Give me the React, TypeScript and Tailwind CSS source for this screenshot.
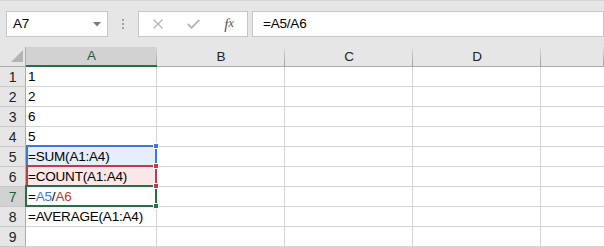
const rows = ['1', '2', '6', '5', '=SUM(A1:A4)', '=COUNT(A1:A4)', '', '=AVERAGE(A1:A4)', '']

const headers = [
  { label: 'A', width: 'w-[131px]' },
  { label: 'B', width: 'w-[128px]' },
  { label: 'C', width: 'w-[128px]' },
  { label: 'D', width: 'w-[128px]' },
  { label: '', width: 'flex-1' },
]

function CornerCell() {
  return (
    <div className="relative h-[20px] w-[26px] border-b border-r border-[#ababab] bg-[#e6e6e6]">
      <svg className="absolute left-[11px] top-[3px]" width="12" height="12" viewBox="0 0 12 12">
        <polygon points="12,0 12,12 0,12" fill="#b4b4b4" />
      </svg>
    </div>
  )
}

function ColumnHeader({ label, width, active }: { label: string; width: string; active: boolean }) {
  return (
    <div
      className={`relative flex h-[20px] items-center justify-center text-[13.5px] ${width} ${
        active ? 'border-b-2 border-[#217346] bg-[#d2d2d2] text-[#1e5e3a]' : 'border-b border-[#ababab] bg-[#e6e6e6] text-[#222]'
      }`}
    >
      {label}
      <div className="absolute right-0 top-0 h-full w-px bg-linear-to-b from-[#dcdcdc] to-[#9e9e9e]" />
    </div>
  )
}

function SheetRow({ index, text }: { index: number; text: string }) {
  const rowNum = index + 1
  const activeRow = rowNum === 7
  let fill = 'bg-white'
  if (rowNum === 5) fill = 'bg-[#e7eef9]'
  if (rowNum === 6) fill = 'bg-[#fae8e8]'

  return (
    <div className="flex h-[20px]">
      <div
        className={`flex w-[26px] items-center justify-center border-b border-r border-b-[#c8c8c8] border-r-[#ababab] text-[14px] ${
          activeRow ? 'bg-[#d2d2d2] text-[#1e5e3a]' : 'bg-[#e6e6e6] text-[#222]'
        }`}
      >
        {rowNum}
      </div>
      <div className={`flex w-[131px] items-center border-b border-r border-[#d4d4d4] pl-[2px] ${fill}`}>
        {activeRow ? (
          <span>
            =<span className="text-[#3c78d8]">A5</span>/<span className="text-[#c0392b]">A6</span>
          </span>
        ) : (
          text
        )}
      </div>
      <div className="w-[128px] border-b border-r border-[#d4d4d4] bg-white" />
      <div className="w-[128px] border-b border-r border-[#d4d4d4] bg-white" />
      <div className="w-[128px] border-b border-r border-[#d4d4d4] bg-white" />
      <div className="flex-1 border-b border-[#d4d4d4] bg-white" />
    </div>
  )
}

function Handle({ color, className }: { color: string; className: string }) {
  return <div className={`absolute h-[6px] w-[6px] border border-white ${color} ${className}`} />
}

export default function App() {
  return (
    <div className="relative h-[247px] w-[604px] overflow-hidden bg-[#e6e6e6] font-['Liberation_Sans',Arial,sans-serif] text-[13.5px] leading-none tracking-[-0.2px] text-black">
      {/* formula bar */}
      <div className="flex h-[47px] items-start border-t border-[#d6d6d6] pt-[10px]">
        <div className="ml-[6px] flex h-[26px] w-[102px] items-center justify-between border border-[#c6c6c6] bg-white pl-[6px] pr-[6px]">
          <span>A7</span>
          <svg width="8" height="5" viewBox="0 0 8 5">
            <polygon points="0,0 8,0 4,4.5" fill="#7a7a7a" />
          </svg>
        </div>
        <div className="flex h-[26px] w-[30px] flex-col items-center justify-center gap-[2px]">
          <span className="h-[2px] w-[2px] bg-[#a0a0a0]" />
          <span className="h-[2px] w-[2px] bg-[#a0a0a0]" />
          <span className="h-[2px] w-[2px] bg-[#a0a0a0]" />
        </div>
        <div className="flex h-[26px] w-[110px] items-center border border-[#c6c6c6] bg-white">
          <div className="flex w-[36px] justify-center pl-[2px]">
            <svg width="10" height="10" viewBox="0 0 10 10">
              <path d="M0.5 0.5 L9.5 9.5 M9.5 0.5 L0.5 9.5" stroke="#b3b3b3" strokeWidth="1.3" />
            </svg>
          </div>
          <div className="flex w-[36px] justify-center">
            <svg width="13" height="10" viewBox="0 0 13 10">
              <path d="M0.8 5 L4.5 8.8 L12.3 0.8" stroke="#b3b3b3" strokeWidth="1.8" fill="none" />
            </svg>
          </div>
          <div className="flex w-[36px] justify-center font-['Liberation_Serif',serif] text-[15px] italic tracking-normal text-[#555]">
            f<span className="text-[12px]">x</span>
          </div>
        </div>
        <div className="ml-[4px] flex h-[26px] flex-1 items-center border border-[#c6c6c6] bg-white pl-[10px]">
          =A5/A6
        </div>
      </div>

      {/* column headers */}
      <div className="flex">
        <CornerCell />
        {headers.map((h) => (
          <ColumnHeader key={h.label || 'E'} label={h.label} width={h.width} active={h.label === 'A'} />
        ))}
      </div>

      {/* rows */}
      {rows.map((text, i) => (
        <SheetRow key={i} index={i} text={text} />
      ))}

      {/* reference highlights */}
      <div className="absolute left-[26px] top-[145px] h-[22px] w-[131px] border-2 border-[#3c78d8]" />
      <div className="absolute left-[26px] top-[165px] h-[22px] w-[131px] border-2 border-[#c43b45]" />
      <div className="absolute left-[25px] top-[185px] h-[22px] w-[132px] border-2 border-[#217346]" />
      <Handle color="bg-[#3c78d8]" className="left-[153px] top-[143px]" />
      <Handle color="bg-[#c43b45]" className="left-[153px] top-[163px]" />
      <Handle color="bg-[#c43b45]" className="left-[153px] top-[183px]" />
      <Handle color="bg-[#217346]" className="left-[153px] top-[203px]" />
    </div>
  )
}
